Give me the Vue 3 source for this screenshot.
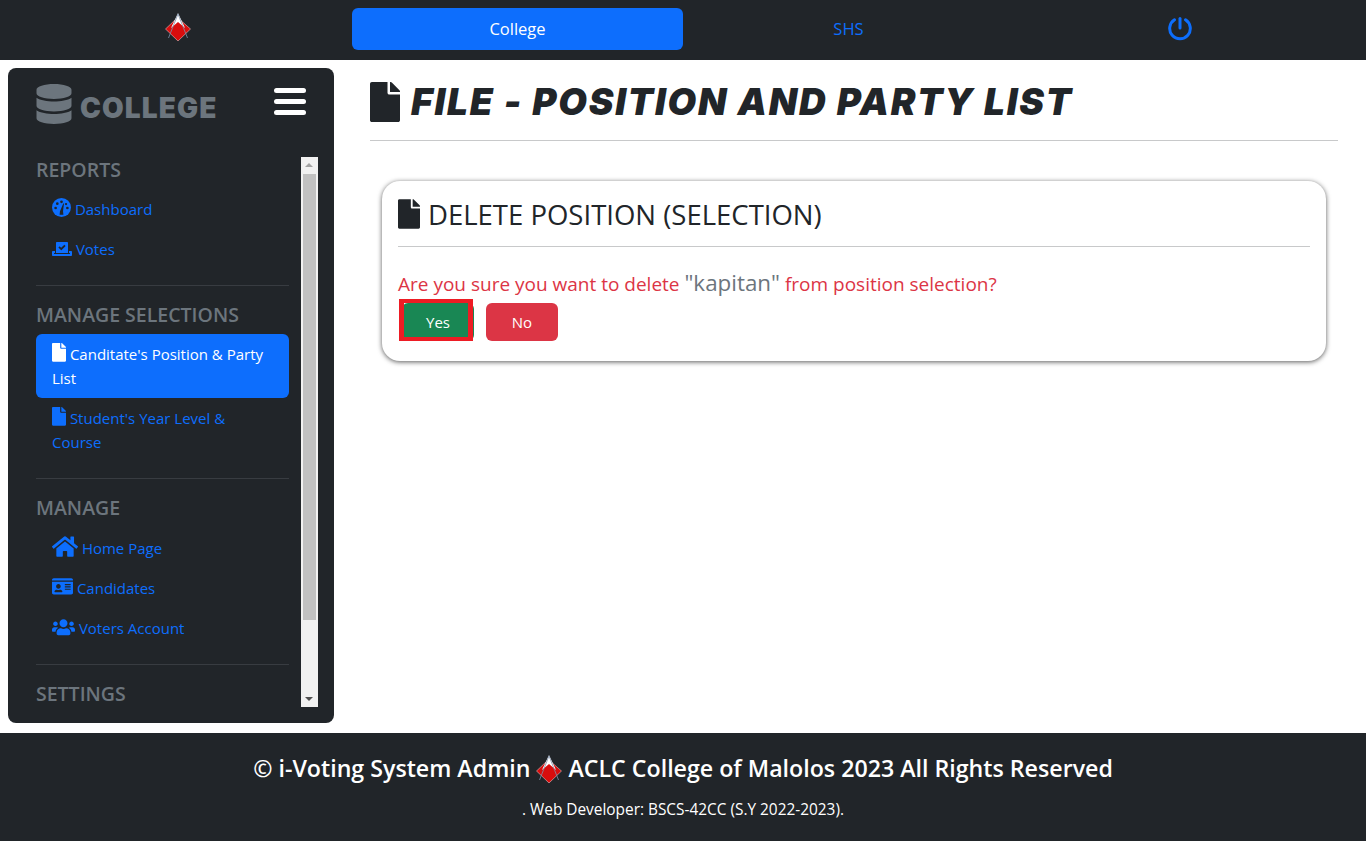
<script setup>
const filePath = 'M224 136V0H24C10.7 0 0 10.7 0 24v464c0 13.3 10.7 24 24 24h336c13.3 0 24-10.7 24-24V160H248c-13.2 0-24-10.8-24-24zm160-14.1v6.1H256V0h6.1c6.4 0 12.5 2.5 17 7l97.9 98c4.5 4.5 7 10.6 7 16.9z'

const icons = {
  vote: { box: '0 0 640 512', d: 'M608 320h-64v64h22.4c5.3 0 9.6 3.6 9.6 8v16c0 4.4-4.3 8-9.6 8H73.6c-5.3 0-9.6-3.6-9.6-8v-16c0-4.4 4.3-8 9.6-8H96v-64H32c-17.7 0-32 14.3-32 32v96c0 17.7 14.3 32 32 32h576c17.7 0 32-14.3 32-32v-96c0-17.7-14.3-32-32-32zm-96 64V64.3c0-17.9-14.5-32.3-32.3-32.3H160.4C142.5 32 128 46.5 128 64.3V384h384zM211.2 202l25.5-25.3c4.2-4.2 11-4.2 15.2.1l41.3 41.6 95.2-94.4c4.2-4.2 11-4.2 15.2.1l25.3 25.5c4.2 4.2 4.2 11-.1 15.2L300.5 292c-4.2 4.2-11 4.2-15.2-.1l-74.1-74.7c-4.3-4.2-4.2-11 0-15.2z' },
  file: { box: '0 0 384 512', d: filePath },
  home: { box: '0 0 576 512', d: 'M280.37 148.26L96 300.11V464a16 16 0 0 0 16 16l112.06-.29a16 16 0 0 0 15.92-16V368a16 16 0 0 1 16-16h64a16 16 0 0 1 16 16v95.64a16 16 0 0 0 16 16.05L464 480a16 16 0 0 0 16-16V300L295.67 148.26a12.19 12.19 0 0 0-15.3 0zM571.6 251.47L488 182.56V44.05a12 12 0 0 0-12-12h-56a12 12 0 0 0-12 12v72.61L318.47 43a48 48 0 0 0-61 0L4.34 251.47a12 12 0 0 0-1.6 16.9l25.5 31A12 12 0 0 0 45.15 301l235.22-193.74a12.19 12.19 0 0 1 15.3 0L530.9 301a12 12 0 0 0 16.9-1.6l25.5-31a12 12 0 0 0-1.7-16.93z' },
  card: { box: '0 0 576 512', d: 'M528 32H48C21.5 32 0 53.5 0 80v16h576V80c0-26.5-21.5-48-48-48zM0 432c0 26.5 21.5 48 48 48h480c26.5 0 48-21.5 48-48V128H0v304zm352-232c0-4.4 3.6-8 8-8h144c4.4 0 8 3.6 8 8v16c0 4.4-3.6 8-8 8H360c-4.4 0-8-3.6-8-8v-16zm0 64c0-4.4 3.6-8 8-8h144c4.4 0 8 3.6 8 8v16c0 4.4-3.6 8-8 8H360c-4.4 0-8-3.6-8-8v-16zm0 64c0-4.4 3.6-8 8-8h144c4.4 0 8 3.6 8 8v16c0 4.4-3.6 8-8 8H360c-4.4 0-8-3.6-8-8v-16zM176 192c35.3 0 64 28.7 64 64s-28.7 64-64 64-64-28.7-64-64 28.7-64 64-64zM67.1 396.2C75.5 370.5 99.6 352 128 352h8.2c12.3 5.1 25.7 8 39.8 8s27.6-2.9 39.8-8h8.2c28.4 0 52.5 18.5 60.9 44.2 3.2 9.9-5.2 19.8-15.6 19.8H82.7c-10.4 0-18.8-10-15.6-19.8z' },
  users: { box: '0 0 640 512', d: 'M96 224c35.3 0 64-28.7 64-64s-28.7-64-64-64-64 28.7-64 64 28.7 64 64 64zm448 0c35.3 0 64-28.7 64-64s-28.7-64-64-64-64 28.7-64 64 28.7 64 64 64zm32 32h-64c-17.6 0-33.5 7.1-45.1 18.6 40.3 22.1 68.9 62 75.1 109.4h66c17.7 0 32-14.3 32-32v-32c0-35.3-28.7-64-64-64zm-256 0c61.9 0 112-50.1 112-112S381.9 32 320 32 208 82.1 208 144s50.1 112 112 112zm76.8 32h-8.3c-20.8 10-43.9 16-68.5 16s-47.6-6-68.5-16h-8.3C179.6 288 128 339.6 128 403.2V432c0 26.5 21.5 48 48 48h288c26.5 0 48-21.5 48-48v-28.8c0-63.6-51.6-115.2-115.2-115.2zm-223.7-13.4C161.5 263.1 145.6 256 128 256H64c-35.3 0-64 28.7-64 64v32c0 17.7 14.3 32 32 32h65.9c6.3-47.4 34.9-87.3 75.2-109.4z' }
}

const groups = [
  { title: 'REPORTS', links: [{ label: 'Dashboard', icon: 'gauge', w: 19 }, { label: 'Votes', icon: 'vote', w: 20 }] },
  { title: 'MANAGE SELECTIONS', links: [
    { label: "Canditate's Position & Party List", icon: 'file', w: 14, active: true },
    { label: "Student's Year Level & Course", icon: 'file', w: 14 }
  ] },
  { title: 'MANAGE', links: [
    { label: 'Home Page', icon: 'home', w: 26 },
    { label: 'Candidates', icon: 'card', w: 21 },
    { label: 'Voters Account', icon: 'users', w: 23 }
  ] },
  { title: 'SETTINGS', links: [] }
]
</script>

<template>
  <div class="page">
    <header class="topbar">
      <div class="top-cell top-logo">
        <svg class="logo" viewBox="0 0 26 28">
          <polygon points="0.5,16 12,5 13,5 25.5,16 13,28" fill="#d90d0d" stroke="#f2dede" stroke-width="0.5" />
          <polygon points="13,0 20,15 13,9 6,15" fill="#ffffff" />
          <path d="M13 1 L3.5 25 M13 1 L22.5 25" stroke="#7f90ab" stroke-width="0.8" fill="none" />
        </svg>
      </div>
      <a class="top-cell top-btn active">College</a>
      <a class="top-cell top-btn">SHS</a>
      <div class="top-cell">
        <svg class="power" viewBox="0 0 24 24" fill="none" stroke="#0d6efd" stroke-width="3" stroke-linecap="round">
          <path d="M6.5 2.8 A10.3 10.3 0 1 0 17.5 2.8" />
          <path d="M12 1.5 V11" />
        </svg>
      </div>
    </header>

    <div class="middle">
      <aside class="sidebar">
        <div class="side-head">
          <h2 class="side-title">
            <svg class="db-icon" viewBox="0 0 448 512"><path d="M448 73.143v45.714C448 159.143 347.667 192 224 192S0 159.143 0 118.857V73.143C0 32.857 100.333 0 224 0s224 32.857 224 73.143zM448 176v102.857C448 319.143 347.667 352 224 352S0 319.143 0 278.857V176c48.125 33.143 136.208 48.572 224 48.572S399.874 209.143 448 176zm0 160v102.857C448 479.143 347.667 512 224 512S0 479.143 0 438.857V336c48.125 33.143 136.208 48.572 224 48.572S399.874 369.143 448 336z" /></svg>
            <span>COLLEGE</span>
          </h2>
          <button class="burger" type="button"><span></span><span></span><span></span></button>
        </div>

        <div class="side-body">
          <nav class="side-list">
            <section v-for="(group, i) in groups" :key="group.title" class="side-group">
              <hr v-if="i > 0" class="side-hr" />
              <h3 class="group-title">{{ group.title }}</h3>
              <a v-for="link in group.links" :key="link.label" class="side-link" :class="{ active: link.active }">
                <svg v-if="link.icon === 'gauge'" class="side-icon" :style="{ width: link.w + 'px' }" viewBox="0 0 20 20">
                  <circle cx="10" cy="10" r="10" fill="currentColor" />
                  <circle cx="10" cy="4" r="1.4" fill="#212529" />
                  <circle cx="5.6" cy="6" r="1.4" fill="#212529" />
                  <circle cx="3.8" cy="10.5" r="1.4" fill="#212529" />
                  <circle cx="16.2" cy="10.5" r="1.4" fill="#212529" />
                  <circle cx="14.8" cy="6.4" r="1.2" fill="#212529" />
                  <path d="M8 17.5 L8.4 14 L12 5.5 L12.6 6 L11.6 14 L12 17.5 Z" fill="#212529" />
                </svg>
                <svg v-else class="side-icon" :class="'icon-' + link.icon" :style="{ width: link.w + 'px' }" :viewBox="icons[link.icon].box">
                  <path :d="icons[link.icon].d" fill="currentColor" />
                </svg>
                {{ link.label }}
              </a>
            </section>
          </nav>
          <div class="scrollbar">
            <div class="arrow up"></div>
            <div class="track"><div class="thumb"></div></div>
            <div class="arrow down"></div>
          </div>
        </div>
      </aside>

      <main class="content">
        <h1 class="page-title">
          <svg class="title-icon" viewBox="0 0 384 512"><path :d="filePath" /></svg>
          <span>FILE - POSITION AND PARTY LIST</span>
        </h1>
        <hr class="main-hr" />

        <section class="card">
          <h2 class="card-title">
            <svg class="card-icon" viewBox="0 0 384 512"><path :d="filePath" /></svg>
            <span>DELETE POSITION (SELECTION)</span>
          </h2>
          <hr class="main-hr" />
          <p class="question">Are you sure you want to delete <span class="name">"kapitan"</span> from position selection?</p>
          <div class="actions">
            <button class="btn yes" type="button">Yes<span class="mark"></span></button>
            <button class="btn no" type="button">No</button>
          </div>
        </section>
      </main>
    </div>

    <footer class="footer">
      <p class="foot-main">
        © i-Voting System Admin
        <svg class="logo foot-logo" viewBox="0 0 26 28">
          <polygon points="0.5,16 12,5 13,5 25.5,16 13,28" fill="#d90d0d" stroke="#f2dede" stroke-width="0.5" />
          <polygon points="13,0 20,15 13,9 6,15" fill="#ffffff" />
          <path d="M13 1 L3.5 25 M13 1 L22.5 25" stroke="#7f90ab" stroke-width="0.8" fill="none" />
        </svg>
        ACLC College of Malolos 2023 All Rights Reserved
      </p>
      <p class="foot-sub">. Web Developer: BSCS-42CC (S.Y 2022-2023).</p>
    </footer>
  </div>
</template>

<style>
html, body {
  margin: 0;
  background: #fff;
}
</style>

<style scoped>
.page {
  height: 841px;
  display: flex;
  flex-direction: column;
  overflow: hidden;
  font-family: "Open Sans", "Noto Sans", sans-serif;
  font-size: 15px;
  line-height: 24px;
  color: #212529;
}

.topbar {
  height: 60px;
  flex: none;
  box-sizing: border-box;
  padding: 8px 0 10px 12px;
  background: #212529;
  display: grid;
  grid-template-columns: 340px 331px 331px 332px;
}

.top-cell {
  display: flex;
  align-items: center;
  justify-content: center;
}

.top-logo {
  padding-right: 8px;
  padding-bottom: 4px;
}

.logo {
  width: 26px;
  height: 28px;
}

.top-btn {
  border-radius: 6px;
  color: #0d6efd;
  font-size: 16.5px;
  padding-bottom: 1px;
  box-sizing: border-box;
}

.top-btn.active {
  background: #0d6efd;
  color: #fff;
}

.power {
  width: 24px;
  height: 24px;
}

.middle {
  flex: 1;
  display: flex;
  min-height: 0;
}

.sidebar {
  width: 326px;
  flex: none;
  box-sizing: border-box;
  margin: 8px 0 10px 8px;
  padding: 16px 16px 16px 28px;
  background: #212529;
  border-radius: 8px;
  display: flex;
  flex-direction: column;
}

.side-head {
  height: 73px;
  flex: none;
  display: flex;
  justify-content: space-between;
  align-items: flex-start;
  padding-right: 12px;
}

.side-title {
  margin: 0;
  display: flex;
  align-items: center;
  gap: 8px;
  height: 40px;
  color: #6c757d;
  font-family: Inter, "Open Sans", sans-serif;
  font-size: 28px;
  font-weight: 900;
  line-height: 40px;
  letter-spacing: 1.1px;
}

.side-title span {
  padding-top: 8px;
}

.db-icon {
  width: 36px;
  height: 40px;
  fill: #6c757d;
}

.burger {
  width: 32px;
  height: 27px;
  margin-top: 4px;
  padding: 0;
  border: 0;
  background: none;
  display: flex;
  flex-direction: column;
  justify-content: space-between;
}

.burger span {
  height: 5px;
  background: #fff;
  border-radius: 2.5px;
}

.side-body {
  height: 550px;
  flex: none;
  display: flex;
  justify-content: space-between;
}

.side-list {
  width: 253px;
  overflow: hidden;
}

.side-group {
  padding-bottom: 16px;
}

.side-hr {
  height: 1px;
  margin: 0 0 16px;
  border: 0;
  background: #383c41;
}

.group-title {
  margin: 0 0 7px;
  padding-top: 1px;
  color: #6c757d;
  font-size: 19.5px;
  font-weight: 600;
  line-height: 24px;
}

.side-link {
  display: block;
  padding: 8px 16px;
  color: #0d6efd;
  border-radius: 6px;
}

.side-link.active {
  background: #0d6efd;
  color: #fff;
}

.side-icon {
  display: inline-block;
  height: auto;
  vertical-align: -2px;
}

.side-icon.icon-home {
  vertical-align: -4px;
}

.scrollbar {
  width: 17px;
  display: flex;
  flex-direction: column;
  background: #f1f1f1;
}

.arrow {
  height: 17px;
  flex: none;
  position: relative;
}

.arrow::after {
  content: "";
  position: absolute;
  left: 4px;
  border-left: 4px solid transparent;
  border-right: 4px solid transparent;
}

.arrow.up::after {
  top: 6px;
  border-bottom: 4px solid #a3a3a3;
}

.arrow.down::after {
  top: 7px;
  border-top: 4px solid #505050;
}

.track {
  flex: 1;
  padding: 0 2px;
}

.thumb {
  height: 446px;
  background: #c1c1c1;
}

.content {
  flex: 1;
  min-width: 0;
  padding: 8px 28px 0 36px;
}

.page-title {
  margin: 12px 0 17px;
  height: 43px;
  display: flex;
  align-items: center;
  gap: 11px;
  font-family: Inter, "Open Sans", sans-serif;
  font-size: 37px;
  font-style: italic;
  font-weight: 900;
  line-height: 43px;
  letter-spacing: 1.8px;
}

.title-icon {
  width: 30px;
  height: 40px;
  fill: #212529;
}

.main-hr {
  height: 1px;
  margin: 0;
  border: 0;
  background: #c8c9ca;
}

.card {
  margin: 40px 12px 0;
  height: 180px;
  box-sizing: border-box;
  padding: 16px 16px 0;
  background: #fff;
  border-radius: 18px;
  box-shadow: 0 1px 5px rgba(0, 0, 0, 0.65);
}

.card-title {
  margin: 0 0 15px;
  height: 34px;
  display: flex;
  align-items: center;
  gap: 8px;
  font-size: 27.5px;
  font-weight: 500;
  line-height: 34px;
}

.card-title span {
  padding-top: 2px;
}

.card-icon {
  width: 22px;
  height: 30px;
  fill: #212529;
}

.question {
  margin: 22px 0 0;
  color: #dc3545;
  font-size: 19px;
  line-height: 27px;
}

.name {
  color: #6c757d;
  font-size: 22.4px;
}

.actions {
  display: flex;
  gap: 12px;
  margin: 5px 0 0 4px;
}

.btn {
  position: relative;
  width: 72px;
  height: 38px;
  padding: 0;
  border: 0;
  border-radius: 6px;
  color: #fff;
  font-family: inherit;
  font-size: 15px;
}

.btn.yes {
  background: #198754;
}

.btn.no {
  background: #dc3545;
}

.mark {
  position: absolute;
  left: -3px;
  top: -4px;
  width: 74px;
  height: 42px;
  box-sizing: border-box;
  border: solid #ed1c24;
  border-width: 4px 5px;
}

.footer {
  height: 108px;
  flex: none;
  box-sizing: border-box;
  padding-top: 17px;
  background: #212529;
  color: #fff;
  text-align: center;
}

.foot-main {
  margin: 0;
  height: 36px;
  font-size: 23.2px;
  font-weight: 600;
  line-height: 36px;
}

.foot-logo {
  vertical-align: -6px;
}

.foot-sub {
  margin: 12px 0 0;
  font-size: 15.4px;
  line-height: 24px;
}
</style>
